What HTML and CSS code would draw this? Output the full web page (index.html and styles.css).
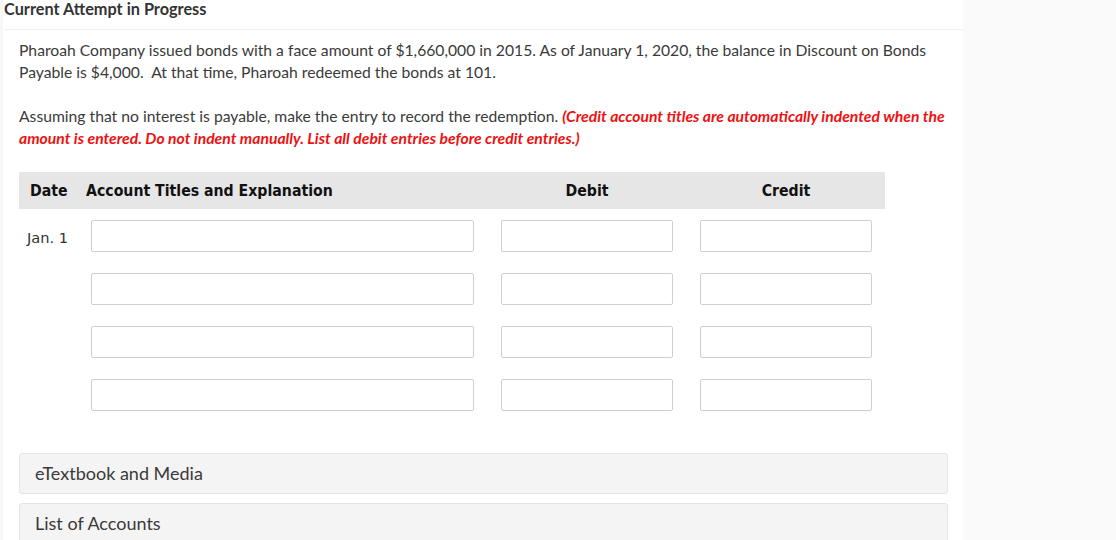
FILE: index.html
```html
<!DOCTYPE html>
<html>
<head>
<meta charset="utf-8">
<link rel="stylesheet" href="styles.css">
</head>
<body>
<div class="page">
  <div class="main">
    <div class="title">Current Attempt in Progress</div>
    <div class="content">
      <p class="para">Pharoah Company issued bonds with a face amount of $1,660,000 in 2015. As of January 1, 2020, the balance in Discount on Bonds Payable is $4,000.&nbsp; At that time, Pharoah redeemed the bonds at 101.</p>
      <p class="para second">Assuming that no interest is payable, make the entry to record the redemption. <span class="warn">(Credit account titles are automatically indented when the amount is entered. Do not indent manually. List all debit entries before credit entries.)</span></p>
      <div class="thead">
        <div class="th">Date</div>
        <div class="th">Account Titles and Explanation</div>
        <div class="th center debit">Debit</div>
        <div class="th center credit">Credit</div>
      </div>
      <div class="rows">
        <div class="date">Jan. 1</div>
        <input class="inp acct" type="text">
        <input class="inp amt" type="text">
        <input class="inp amt" type="text">
        <div class="date"></div>
        <input class="inp acct" type="text">
        <input class="inp amt" type="text">
        <input class="inp amt" type="text">
        <div class="date"></div>
        <input class="inp acct" type="text">
        <input class="inp amt" type="text">
        <input class="inp amt" type="text">
        <div class="date"></div>
        <input class="inp acct" type="text">
        <input class="inp amt" type="text">
        <input class="inp amt" type="text">
      </div>
      <div class="panel first">eTextbook and Media</div>
      <div class="panel">List of Accounts</div>
    </div>
  </div>
  <div class="side"></div>
</div>
</body>
</html>
```
FILE: styles.css
```css
html, body {
  margin: 0;
  padding: 0;
  height: 540px;
  overflow: hidden;
  background: #fafafa;
}
.page {
  display: flex;
  height: 540px;
  font-family: Lato, "Liberation Sans", sans-serif;
  color: #3a3a3a;
}
.main {
  width: 963px;
  background: #fff;
  box-shadow: inset 3px 0 0 #f7f7f7;
}
.side {
  flex: 1;
  background: #fafafa;
}
.title {
  height: 30px;
  padding-left: 4px;
  font-weight: 700;
  font-size: 16.3px;
  line-height: 17px;
  color: #333;
  background: linear-gradient(#fff 29px, #f1f1f1 29px, #f1f1f1 30px) no-repeat 4px 0 / 959px 30px;
}
.content {
  padding-left: 19px;
}
.para {
  width: 935px;
  margin: 9px 0 0 0;
  font-size: 15.7px;
  line-height: 22px;
  color: #3a3a3a;
}
.para.second {
  margin-top: 22px;
}
.warn {
  color: #ee1111;
  font-weight: 700;
  font-style: italic;
}
.thead {
  margin-top: 23px;
  width: 866px;
  height: 37px;
  background: #e6e6e6;
  display: grid;
  grid-template-columns: 56px 415px 172px 27px 172px;
  padding-left: 11px;
  box-sizing: border-box;
  align-items: center;
}
.th {
  font-family: "DejaVu Sans Condensed", "DejaVu Sans", sans-serif;
  font-weight: 700;
  font-size: 15.7px;
  color: #111;
}
.th.center { text-align: center; }
.th.debit { grid-column: 3; }
.th.credit { grid-column: 5; }
.rows {
  margin-top: 11px;
  display: grid;
  grid-template-columns: 72px 383px 199px 199px;
  grid-auto-rows: 32px;
  row-gap: 21px;
}
.inp.acct { width: 383px; }
.inp.amt { margin-left: 27px; width: 172px; }
.date {
  font-family: "DejaVu Sans", sans-serif;
  font-size: 14.6px;
  color: #333;
  padding-left: 8px;
  height: 32px;
  line-height: 36px;
}
.inp {
  height: 32px;
  box-sizing: border-box;
  border: 1px solid #cfcfcf;
  border-radius: 2px;
  background: #fff;
  margin: 0;
  padding: 0 6px;
  outline: none;
}
.panel {
  width: 929px;
  height: 41px;
  box-sizing: border-box;
  background: #f4f4f4;
  border: 1px solid #e4e4e4;
  border-radius: 3px;
  padding-left: 15px;
  font-size: 18px;
  line-height: 39px;
  color: #3a3a3a;
}
.panel.first {
  margin-top: 42px;
  margin-bottom: 9px;
}
```
